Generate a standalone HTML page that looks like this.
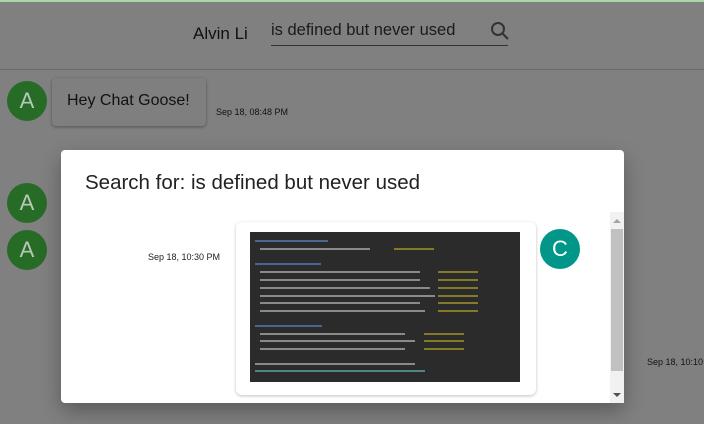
<!DOCTYPE html>
<html><head><style>
body{margin:0;width:704px;height:424px;overflow:hidden;background:#808080;font-family:"Liberation Sans",sans-serif;position:relative}
.a{position:absolute}
.av{position:absolute;width:40px;height:40px;border-radius:50%;background:#266b26;color:#b8c8b8;font-size:22px;text-align:center;line-height:40px}
.ln{position:absolute;height:2px;background:#4d6390}
.tx{position:absolute;height:2px;background:#8a8a8a}
.yl{position:absolute;height:2px;background:#857a28}
</style></head><body>
<div class="a" style="left:0;top:0;width:704px;height:2px;background:#a8d8a8"></div>
<div class="a" style="left:193px;top:24px;font-size:17px;color:#111">Alvin Li</div>
<div class="a" style="left:271px;top:21px;font-size:16.5px;color:#1a1a1a">is defined but never used</div>
<svg class="a" style="left:489px;top:20px" width="22" height="22" viewBox="0 0 22 22"><circle cx="9" cy="9" r="6" fill="none" stroke="#333" stroke-width="2"/><line x1="13.5" y1="13.5" x2="19" y2="19" stroke="#333" stroke-width="2.2"/></svg>
<div class="a" style="left:271px;top:45px;width:237px;height:1px;background:#333"></div>
<div class="a" style="left:0;top:69px;width:704px;height:1px;background:#6a6a6a"></div>
<div class="av" style="left:7px;top:81px">A</div>
<div class="a" style="left:52px;top:78px;width:154px;height:48px;background:#7f7f7f;border-radius:4px;box-shadow:0 1px 3px rgba(0,0,0,.35)"></div>
<div class="a" style="left:67px;top:92px;font-size:16px;color:#111">Hey Chat Goose!</div>
<div class="a" style="left:216px;top:107px;font-size:9px;color:#111">Sep 18, 08:48 PM</div>
<div class="av" style="left:7px;top:183px">A</div>
<div class="av" style="left:7px;top:230px">A</div>
<div class="a" style="left:647px;top:357px;font-size:9px;color:#111">Sep 18, 10:10</div>
<div class="a" style="left:61px;top:150px;width:563px;height:253px;background:#fff;border-radius:4px;box-shadow:0 8px 20px rgba(0,0,0,.3)"></div>
<div class="a" style="left:85px;top:171px;font-size:20.5px;color:#222">Search for: is defined but never used</div>
<div class="a" style="left:148px;top:252px;font-size:9px;color:#222">Sep 18, 10:30 PM</div>
<div class="a" style="left:236px;top:222px;width:300px;height:173px;background:#fff;border-radius:6px;box-shadow:0 1px 3px rgba(0,0,0,.25)"></div>
<div class="a" style="left:250px;top:232px;width:270px;height:150px;background:#2b2b2b"></div>
<div class="ln" style="left:255px;top:240px;width:73px"></div>
<div class="tx" style="left:260px;top:248px;width:110px"></div><div class="yl" style="left:394px;top:248px;width:40px"></div>
<div class="ln" style="left:255px;top:263px;width:66px"></div>
<div class="tx" style="left:260px;top:271px;width:160px"></div><div class="yl" style="left:438px;top:271px;width:40px"></div>
<div class="tx" style="left:260px;top:279px;width:160px"></div><div class="yl" style="left:438px;top:279px;width:40px"></div>
<div class="tx" style="left:260px;top:287px;width:170px"></div><div class="yl" style="left:438px;top:287px;width:40px"></div>
<div class="tx" style="left:260px;top:295px;width:175px"></div><div class="yl" style="left:438px;top:295px;width:40px"></div>
<div class="tx" style="left:260px;top:302px;width:160px"></div><div class="yl" style="left:438px;top:302px;width:40px"></div>
<div class="tx" style="left:260px;top:310px;width:165px"></div><div class="yl" style="left:438px;top:310px;width:40px"></div>
<div class="ln" style="left:255px;top:325px;width:67px"></div>
<div class="tx" style="left:260px;top:333px;width:145px"></div><div class="yl" style="left:424px;top:333px;width:40px"></div>
<div class="tx" style="left:260px;top:340px;width:155px"></div><div class="yl" style="left:424px;top:340px;width:40px"></div>
<div class="tx" style="left:260px;top:348px;width:145px"></div><div class="yl" style="left:424px;top:348px;width:40px"></div>
<div class="tx" style="left:255px;top:363px;width:160px"></div>
<div class="tx" style="left:255px;top:370px;width:170px;background:#4f8585"></div>
<div class="a" style="left:540px;top:229px;width:40px;height:40px;border-radius:50%;background:#009688;color:#fff;font-size:22px;text-align:center;line-height:40px">C</div>
<div class="a" style="left:610px;top:212px;width:14px;height:191px;background:#f1f1f1"></div>
<div class="a" style="left:611px;top:229px;width:12px;height:142px;background:#c1c1c1"></div>
<div class="a" style="left:613px;top:219px;width:0;height:0;border-left:4px solid transparent;border-right:4px solid transparent;border-bottom:4px solid #a3a3a3"></div>
<div class="a" style="left:613px;top:393px;width:0;height:0;border-left:4px solid transparent;border-right:4px solid transparent;border-top:4px solid #505050"></div>
</body></html>
